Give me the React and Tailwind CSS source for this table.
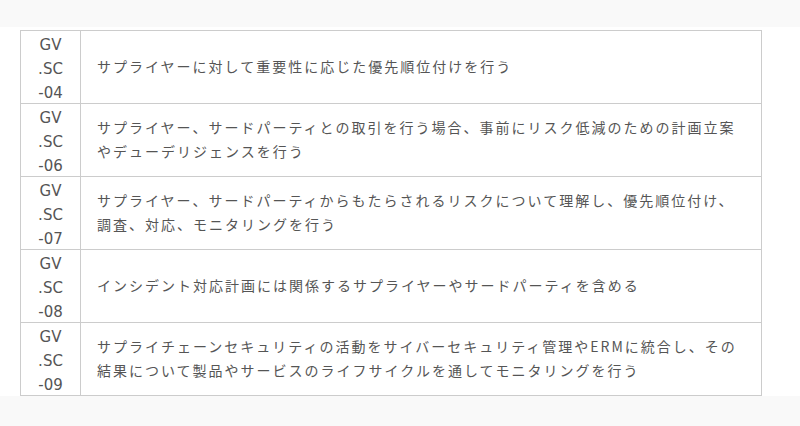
import React from 'react';

const rows = [
  { id: 'GV.SC-04', text: 'サプライヤーに対して重要性に応じた優先順位付けを行う' },
  { id: 'GV.SC-06', text: 'サプライヤー、サードパーティとの取引を行う場合、事前にリスク低減のための計画立案やデューデリジェンスを行う' },
  { id: 'GV.SC-07', text: 'サプライヤー、サードパーティからもたらされるリスクについて理解し、優先順位付け、調査、対応、モニタリングを行う' },
  { id: 'GV.SC-08', text: 'インシデント対応計画には関係するサプライヤーやサードパーティを含める' },
  { id: 'GV.SC-09', text: 'サプライチェーンセキュリティの活動をサイバーセキュリティ管理やERMに統合し、その結果について製品やサービスのライフサイクルを通してモニタリングを行う' },
];

const App = () => {
  return (
    <div className="min-h-screen bg-[#f9f9f9] pt-[27px]">
      <div className="bg-white pt-[3px]">
        <table className="ml-[20px] w-[742px] table-fixed border-collapse text-[#555]">
          <colgroup>
            <col className="w-[60px]" />
            <col />
          </colgroup>
          <tbody>
            {rows.map((row) => (
              <tr key={row.id} className="h-[73px]">
                <td className="border border-[#ccc] p-0 text-center align-middle text-[15px] leading-[24px] font-[family-name:DejaVu_Sans,sans-serif]">
                  {/* id wraps at the dot and the hyphen */}
                  <div className="translate-y-[2px]">
                    {row.id.split(/(?=[.-])/).map((part) => (
                      <div key={part}>{part}</div>
                    ))}
                  </div>
                </td>
                <td className="border border-[#ccc] px-4 py-0 align-middle text-[14px] leading-[24px] tracking-[2px] font-[family-name:Noto_Sans_CJK_JP,sans-serif]">
                  <div className="-translate-y-[1px]">{row.text}</div>
                </td>
              </tr>
            ))}
          </tbody>
        </table>
      </div>
    </div>
  );
};

export default App;
